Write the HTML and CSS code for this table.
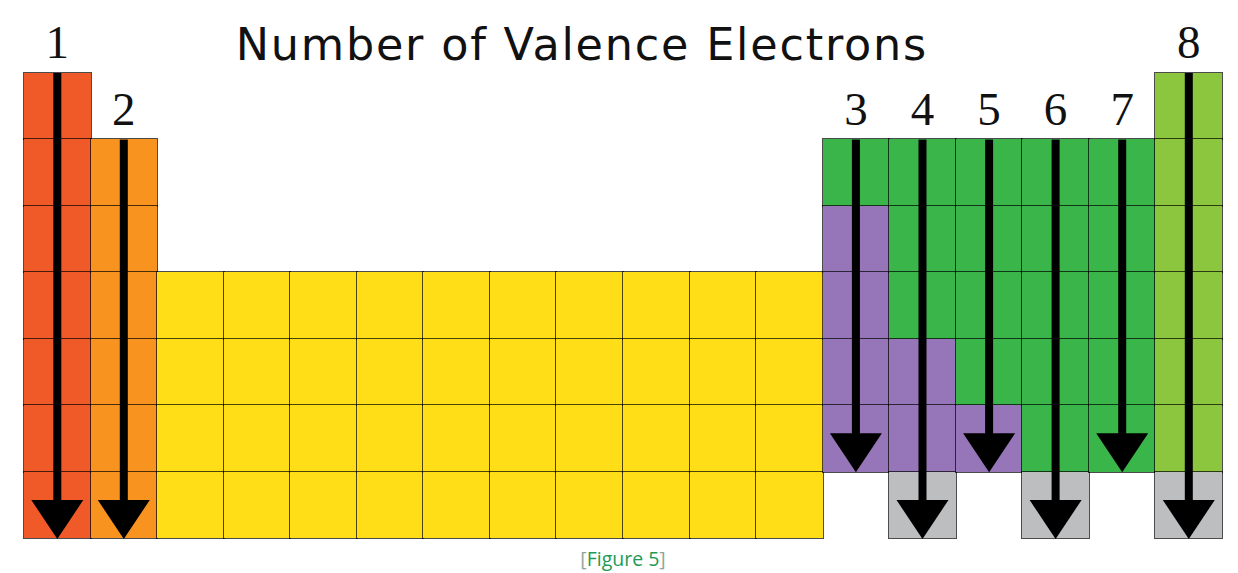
FILE: index.html
```html
<!DOCTYPE html>
<html lang="en">
<head>
<meta charset="utf-8">
<title>Number of Valence Electrons</title>
<link rel="stylesheet" href="styles.css">
</head>
<body>
<figure class="figure">
  <div class="header">
    <div class="num num-1">1</div>
    <h1 class="title">Number of Valence Electrons</h1>
    <div class="num num-8">8</div>
  </div>
  <div class="table">
    <!-- group 1 -->
    <div class="cell red"></div><div class="cell red"></div><div class="cell red"></div><div class="cell red"></div><div class="cell red"></div><div class="cell red"></div><div class="cell red"></div>
    <!-- group 2 -->
    <div class="label">2</div><div class="cell orange"></div><div class="cell orange"></div><div class="cell orange"></div><div class="cell orange"></div><div class="cell orange"></div><div class="cell orange"></div>
    <!-- transition metals x10 -->
    <div class="empty"></div><div class="empty"></div><div class="empty"></div><div class="cell yellow"></div><div class="cell yellow"></div><div class="cell yellow"></div><div class="cell yellow"></div>
    <div class="empty"></div><div class="empty"></div><div class="empty"></div><div class="cell yellow"></div><div class="cell yellow"></div><div class="cell yellow"></div><div class="cell yellow"></div>
    <div class="empty"></div><div class="empty"></div><div class="empty"></div><div class="cell yellow"></div><div class="cell yellow"></div><div class="cell yellow"></div><div class="cell yellow"></div>
    <div class="empty"></div><div class="empty"></div><div class="empty"></div><div class="cell yellow"></div><div class="cell yellow"></div><div class="cell yellow"></div><div class="cell yellow"></div>
    <div class="empty"></div><div class="empty"></div><div class="empty"></div><div class="cell yellow"></div><div class="cell yellow"></div><div class="cell yellow"></div><div class="cell yellow"></div>
    <div class="empty"></div><div class="empty"></div><div class="empty"></div><div class="cell yellow"></div><div class="cell yellow"></div><div class="cell yellow"></div><div class="cell yellow"></div>
    <div class="empty"></div><div class="empty"></div><div class="empty"></div><div class="cell yellow"></div><div class="cell yellow"></div><div class="cell yellow"></div><div class="cell yellow"></div>
    <div class="empty"></div><div class="empty"></div><div class="empty"></div><div class="cell yellow"></div><div class="cell yellow"></div><div class="cell yellow"></div><div class="cell yellow"></div>
    <div class="empty"></div><div class="empty"></div><div class="empty"></div><div class="cell yellow"></div><div class="cell yellow"></div><div class="cell yellow"></div><div class="cell yellow"></div>
    <div class="empty"></div><div class="empty"></div><div class="empty"></div><div class="cell yellow"></div><div class="cell yellow"></div><div class="cell yellow"></div><div class="cell yellow"></div>
    <!-- group 13 -->
    <div class="label">3</div><div class="cell green"></div><div class="cell purple"></div><div class="cell purple"></div><div class="cell purple"></div><div class="cell purple"></div><div class="empty"></div>
    <!-- group 14 -->
    <div class="label">4</div><div class="cell green"></div><div class="cell green"></div><div class="cell green"></div><div class="cell purple"></div><div class="cell purple"></div><div class="cell gray"></div>
    <!-- group 15 -->
    <div class="label">5</div><div class="cell green"></div><div class="cell green"></div><div class="cell green"></div><div class="cell green"></div><div class="cell purple"></div><div class="empty"></div>
    <!-- group 16 -->
    <div class="label">6</div><div class="cell green"></div><div class="cell green"></div><div class="cell green"></div><div class="cell green"></div><div class="cell green"></div><div class="cell gray"></div>
    <!-- group 17 -->
    <div class="label">7</div><div class="cell green"></div><div class="cell green"></div><div class="cell green"></div><div class="cell green"></div><div class="cell green"></div><div class="empty"></div>
    <!-- group 18 -->
    <div class="cell lime"></div><div class="cell lime"></div><div class="cell lime"></div><div class="cell lime"></div><div class="cell lime"></div><div class="cell lime"></div><div class="cell gray"></div>

    <svg class="arrows" viewBox="0 0 1198 466" width="1198" height="466" aria-hidden="true">
      <g fill="#000">
        <!-- 1 -->
        <rect x="29.3" y="0" width="8" height="430"/>
        <polygon points="7.3,427 59.3,427 33.3,466"/>
        <!-- 2 -->
        <rect x="95.8" y="66.6" width="8" height="363.4"/>
        <polygon points="73.8,427 125.8,427 99.8,466"/>
        <!-- 3 -->
        <rect x="827.9" y="66.6" width="8" height="297"/>
        <polygon points="805.9,360.3 857.9,360.3 831.9,399.3"/>
        <!-- 4 -->
        <rect x="894.5" y="66.6" width="8" height="363.4"/>
        <polygon points="872.5,427 924.5,427 898.5,466"/>
        <!-- 5 -->
        <rect x="961.1" y="66.6" width="8" height="297"/>
        <polygon points="939.1,360.3 991.1,360.3 965.1,399.3"/>
        <!-- 6 -->
        <rect x="1027.6" y="66.6" width="8" height="363.4"/>
        <polygon points="1005.6,427 1057.6,427 1031.6,466"/>
        <!-- 7 -->
        <rect x="1094.2" y="66.6" width="8" height="297"/>
        <polygon points="1072.2,360.3 1124.2,360.3 1098.2,399.3"/>
        <!-- 8 -->
        <rect x="1160.8" y="0" width="8" height="430"/>
        <polygon points="1138.8,427 1190.8,427 1164.8,466"/>
      </g>
    </svg>
  </div>
  <figcaption class="caption"><span class="bracket">[</span>Figure 5<span class="bracket">]</span></figcaption>
</figure>
</body>
</html>
```
FILE: styles.css
```css
* {
  box-sizing: border-box;
}

html, body {
  margin: 0;
  padding: 0;
  background: #ffffff;
}

.figure {
  width: 1198px;
  margin: 0 0 0 24px;
}

.header {
  display: grid;
  grid-template-columns: repeat(18, 1fr);
  height: 72.5px;
  align-items: end;
}

.num,
.label {
  font-family: "Liberation Serif", "Times New Roman", serif;
  font-size: 47px;
  line-height: 1;
  color: #111;
  text-align: center;
  padding-bottom: 6.4px;
}

.num-1 {
  grid-column: 1;
}

.num-8 {
  grid-column: 18;
}

.title {
  grid-column: 4 / 18;
  margin: 0;
  padding: 0 0 4.6px 12px;
  font-family: "DejaVu Sans", Verdana, sans-serif;
  font-weight: normal;
  font-size: 44.5px;
  letter-spacing: 1.8px;
  line-height: 1;
  color: #111;
  white-space: nowrap;
}

.table {
  position: relative;
  display: grid;
  grid-template-columns: repeat(18, 1fr);
  grid-template-rows: repeat(7, 66.56px);
  grid-auto-flow: column;
}

.label {
  display: flex;
  align-items: flex-end;
  justify-content: center;
}

.cell {
  outline: 1.8px solid rgba(0, 0, 0, 0.7);
  outline-offset: -0.9px;
}

.red { background: #f05a28; }
.orange { background: #f7931e; }
.yellow { background: #ffde17; }
.green { background: #39b54a; }
.purple { background: #9675b9; }
.lime { background: #8cc63f; }
.gray { background: #bcbec0; }

.arrows {
  position: absolute;
  left: 0;
  top: 0;
  z-index: 1;
  overflow: visible;
}

.caption {
  margin: 0;
  padding-top: 8px;
  text-align: center;
  font-family: "Open Sans", "Liberation Sans", sans-serif;
  font-size: 19.5px;
  line-height: 26px;
  color: #1f9a55;
}

.bracket {
  color: #8fa69a;
}
```
